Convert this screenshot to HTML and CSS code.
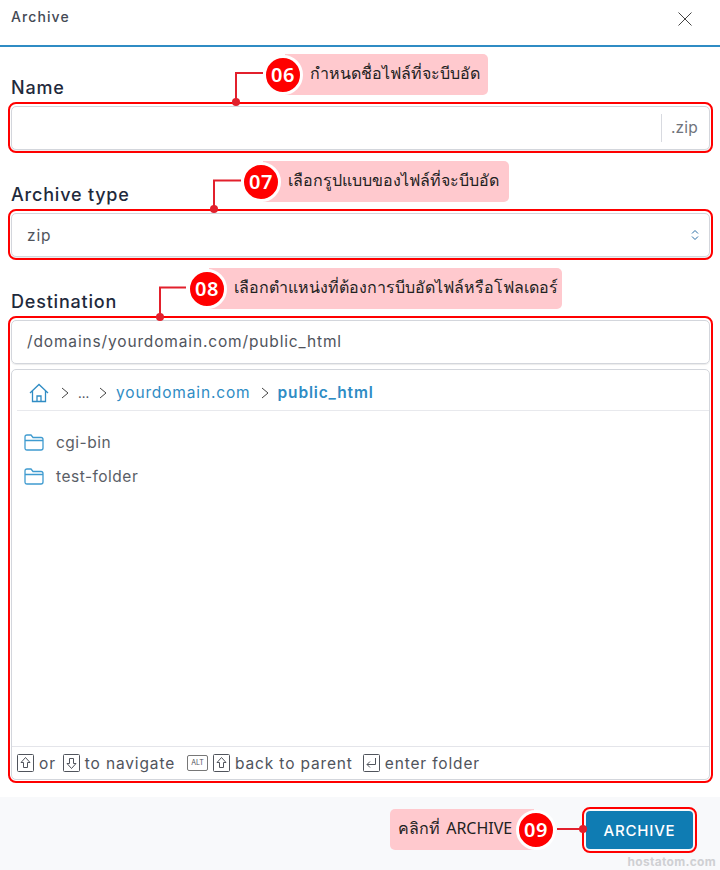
FILE: index.html
```html
<!DOCTYPE html>
<html lang="th">
<head>
    <meta charset="UTF-8">
    <meta name="viewport" content="width=device-width, initial-scale=1.0">
    <title>Archive</title>
    <link rel="stylesheet" href="styles.css">
</head>
<body>
    <!-- reusable key icons -->
    <svg class="defs" width="0" height="0">
        <symbol id="key-up" viewBox="0 0 17 18"><rect x="0.5" y="0.5" width="16" height="17" rx="1" fill="none" stroke="currentColor"/><path d="M8.5 3.5 L13 8.5 H10.5 V13.5 H6.5 V8.5 H4 Z" fill="none" stroke="currentColor"/></symbol>
        <symbol id="key-down" viewBox="0 0 17 18"><rect x="0.5" y="0.5" width="16" height="17" rx="1" fill="none" stroke="currentColor"/><path d="M8.5 14.5 L13 9.5 H10.5 V4.5 H6.5 V9.5 H4 Z" fill="none" stroke="currentColor"/></symbol>
        <symbol id="folder" viewBox="0 0 20 17"><path d="M1 3 Q1 1 3 1 H7 L9 3.5 H17 Q19 3.5 19 5.5 V14 Q19 16 17 16 H3 Q1 16 1 14 Z M1 6.5 H19" fill="none" stroke="currentColor" stroke-width="1.3"/></symbol>
    </svg>

    <div class="dialog">
        <header class="dialog-head">
            <span class="dialog-title">Archive</span>
            <svg class="close" width="14" height="14" viewBox="0 0 14 14"><path d="M0.5 0.5 L13.5 13.5 M13.5 0.5 L0.5 13.5" stroke="#444" fill="none"/></svg>
        </header>

        <main class="dialog-body">
            <label class="label">Name</label>
            <div class="frame">
                <div class="control name-control">
                    <span class="suffix">.zip</span>
                </div>
            </div>

            <label class="label">Archive type</label>
            <div class="frame">
                <div class="control type-control">
                    <span>zip</span>
                    <svg width="8" height="12" viewBox="0 0 8 12"><path d="M1 4.5 L4 1.5 L7 4.5 M1 7.5 L4 10.5 L7 7.5" stroke="#2a6ea5" fill="none"/></svg>
                </div>
            </div>

            <label class="label">Destination</label>
            <div class="frame dest-frame">
                <div class="control path-control">/domains/yourdomain.com/public_html</div>
                <div class="browser">
                    <nav class="crumbs">
                        <svg class="home" width="20" height="20" viewBox="0 0 20 20"><path d="M1 10 L10 1.5 L19 10 M3.5 8 V18.5 H16.5 V8 M8 18.5 V13 H12 V18.5" stroke="#2f8cc4" stroke-width="1.3" fill="none"/></svg>
                        <svg class="chev" width="8" height="12" viewBox="0 0 8 12"><path d="M1 1 L7 6 L1 11" stroke="#444" fill="none"/></svg>
                        <span class="crumb-dots">...</span>
                        <svg class="chev" width="8" height="12" viewBox="0 0 8 12"><path d="M1 1 L7 6 L1 11" stroke="#444" fill="none"/></svg>
                        <span class="crumb-link">yourdomain.com</span>
                        <svg class="chev" width="8" height="12" viewBox="0 0 8 12"><path d="M1 1 L7 6 L1 11" stroke="#444" fill="none"/></svg>
                        <span class="crumb-current">public_html</span>
                    </nav>
                    <ul class="folders">
                        <li><svg width="20" height="17"><use href="#folder"/></svg>cgi-bin</li>
                        <li><svg width="20" height="17"><use href="#folder"/></svg>test-folder</li>
                    </ul>
                    <div class="hints">
                        <svg width="17" height="18"><use href="#key-up"/></svg>
                        <span>or</span>
                        <svg class="down-key" width="17" height="18"><use href="#key-down"/></svg>
                        <span>to navigate</span>
                        <span class="alt-key">ALT</span>
                        <svg width="17" height="18"><use href="#key-up"/></svg>
                        <span>back to parent</span>
                        <svg class="enter-key" width="17" height="18" viewBox="0 0 17 18"><rect x="0.5" y="0.5" width="16" height="17" rx="1" fill="none" stroke="currentColor"/><path d="M12.5 4 V10.5 H4 M7 7.5 L4 10.5 L7 13.5" fill="none" stroke="currentColor"/></svg>
                        <span>enter folder</span>
                    </div>
                </div>
            </div>
        </main>

        <footer class="dialog-foot">
            <div class="frame button-frame">
                <button class="archive-btn">ARCHIVE</button>
            </div>
            <span class="watermark">hostatom.com</span>
        </footer>
    </div>

    <!-- callouts drawn on top of the dialog -->
    <svg class="leaders" width="720" height="870" viewBox="0 0 720 870">
        <path d="M263 73 H236 V102 M241 180.500 H214 V209 M186 287.500 H160 V316 M557 829 H583" />
        <circle cx="236" cy="102" r="4"/>
        <circle cx="214" cy="209" r="4"/>
        <circle cx="160" cy="317" r="4"/>
        <circle cx="583" cy="829" r="4"/>
    </svg>

    <div class="note note-06"><b class="num">06</b><span class="note-text">กำหนดชื่อไฟล์ที่จะบีบอัด</span></div>
    <div class="note note-07"><b class="num">07</b><span class="note-text">เลือกรูปแบบของไฟล์ที่จะบีบอัด</span></div>
    <div class="note note-08"><b class="num">08</b><span class="note-text">เลือกตำแหน่งที่ต้องการบีบอัดไฟล์หรือโฟลเดอร์</span></div>
    <div class="note note-09"><span class="note-text">คลิกที่ ARCHIVE</span><b class="num">09</b></div>
</body>
</html>
```

FILE: styles.css
```css
* {
    box-sizing: border-box;
}

body {
    margin: 0;
    width: 720px;
    height: 870px;
    position: relative;
    overflow: hidden;
    background: #fff;
    font-family: "Inter", "Noto Sans", sans-serif;
    color: #50545c;
}

.defs {
    position: absolute;
}

.dialog {
    height: 870px;
    display: flex;
    flex-direction: column;
}

/* header */
.dialog-head {
    height: 47px;
    flex: none;
    display: flex;
    justify-content: space-between;
    padding: 10px 28px 0 11px;
    border-bottom: 2px solid #2f8cc4;
}

.dialog-title {
    font-size: 14px;
    line-height: 14px;
    font-weight: 500;
    letter-spacing: 1.1px;
    color: #444a55;
}

.close {
    margin-top: 2px;
}

/* form */
.dialog-body {
    flex: 1;
    padding: 0 7px 0 8px;
}

.label {
    display: block;
    height: 28px;
    margin: 28px 3px 0;
    font-size: 18px;
    line-height: 27px;
    font-weight: 450;
    letter-spacing: 0.8px;
    color: #1f2a3c;
}

.label:first-child {
    margin-top: 27px;
}

.frame {
    border: 2px solid #f00;
    border-radius: 8px;
    padding: 2px 1px 1px;
    height: 51px;
}

.control {
    height: 44px;
    border: 1px solid #d3d6dc;
    border-radius: 5px;
    display: flex;
    align-items: center;
    padding: 0 15px;
    font-size: 15.5px;
    letter-spacing: 0.85px;
    color: #50545c;
    box-shadow: 0 1px 1px rgba(0, 0, 0, 0.08);
}

.name-control {
    justify-content: flex-end;
    padding-right: 11px;
}

.suffix {
    border-left: 1px solid #d8dae0;
    height: 28px;
    line-height: 28px;
    padding-left: 9px;
    letter-spacing: 0.2px;
    color: #70747c;
}

.type-control {
    justify-content: space-between;
    padding-right: 10px;
}

.dest-frame {
    height: 467px;
    display: flex;
    flex-direction: column;
    gap: 5px;
}

.path-control {
    flex: none;
    padding-bottom: 2px;
}

/* folder browser */
.browser {
    flex: 1;
    border: 1px solid #d3d6dc;
    border-radius: 5px;
    display: flex;
    flex-direction: column;
    font-size: 15.5px;
    letter-spacing: 0.85px;
}

.crumbs {
    height: 41px;
    flex: none;
    margin: 0 0 0 5px;
    padding: 5px 0 0 12px;
    border-bottom: 1px solid #e8e9ed;
    display: flex;
    align-items: center;
}

.chev {
    margin: 0 9px 0 10px;
}

.home + .chev {
    margin-left: 12px;
}

.crumb-dots {
    font-size: 13px;
    letter-spacing: 0;
    width: 11px;
}

.crumb-link {
    color: #2f8cc4;
}

.crumb-current {
    color: #2f8cc4;
    font-weight: 600;
}

.folders {
    flex: 1;
    list-style: none;
    margin: 0;
    padding: 14px 0 0 12px;
}

.folders li {
    height: 34px;
    display: flex;
    align-items: center;
    gap: 12px;
    letter-spacing: 0.5px;
    color: #5a5e66;
}

.folders svg {
    color: #3f9bd0;
}

.hints {
    height: 33px;
    flex: none;
    border-top: 1px solid #e4e5ea;
    display: flex;
    align-items: center;
    gap: 5px;
    padding-left: 5px;
    color: #50545c;
}

.down-key {
    margin-left: 2px;
}

.alt-key {
    width: 21px;
    height: 16px;
    border: 1px solid #777;
    border-radius: 2px;
    font-size: 7px;
    line-height: 14px;
    letter-spacing: 0;
    text-align: center;
    margin-left: 7px;
}

.enter-key {
    margin-left: 5px;
}

/* footer */
.dialog-foot {
    position: relative;
    height: 73px;
    flex: none;
    background: #f8f9fb;
    display: flex;
    justify-content: flex-end;
    padding: 10px 23px 0 0;
}

.button-frame {
    width: 115px;
    height: 46px;
    padding: 2px;
}

.archive-btn {
    width: 100%;
    height: 38px;
    border: none;
    border-radius: 4px;
    background: #0f7cb3;
    color: #fff;
    font-family: inherit;
    font-size: 15px;
    font-weight: 500;
    letter-spacing: 0.8px;
}

.watermark {
    position: absolute;
    right: 4px;
    bottom: 1px;
    font-size: 12px;
    font-weight: 700;
    letter-spacing: 0.3px;
    color: #cfd0d3;
}

/* callouts */
.leaders {
    position: absolute;
    left: 0;
    top: 0;
}

.leaders path {
    fill: none;
    stroke: #e2202c;
    stroke-width: 2;
}

.leaders circle {
    fill: #e2202c;
}

.note {
    position: absolute;
    height: 41px;
    display: flex;
    align-items: center;
}

.note-06 { left: 263px; top: 54px; }
.note-07 { left: 241px; top: 161px; }
.note-08 { left: 187px; top: 268px; }
.note-09 { left: 390px; top: 809px; }

.num {
    position: relative;
    width: 40px;
    height: 40px;
    flex: none;
    border: 3px solid #fff;
    border-radius: 50%;
    background: #f00;
    color: #fff;
    font-family: "Noto Sans", sans-serif;
    font-size: 20px;
    font-weight: 600;
    line-height: 33px;
    text-align: center;
    letter-spacing: 0.5px;
}

.note-text {
    height: 41px;
    margin-left: -18px;
    padding: 0 8px 0 25px;
    background: #ffc9ce;
    border-radius: 0 5px 5px 0;
    font-family: "Noto Sans", sans-serif;
    font-size: 16px;
    line-height: 38px;
    white-space: nowrap;
    color: #222;
}

.note-07 .note-text {
    padding-right: 10px;
}

.note-08 .note-text {
    padding-right: 4px;
}

.note-09 .note-text {
    width: 144px;
    margin: 0 -18px 0 0;
    padding: 0 0 0 8px;
    border-radius: 5px 0 0 5px;
    word-spacing: 2px;
}
```
